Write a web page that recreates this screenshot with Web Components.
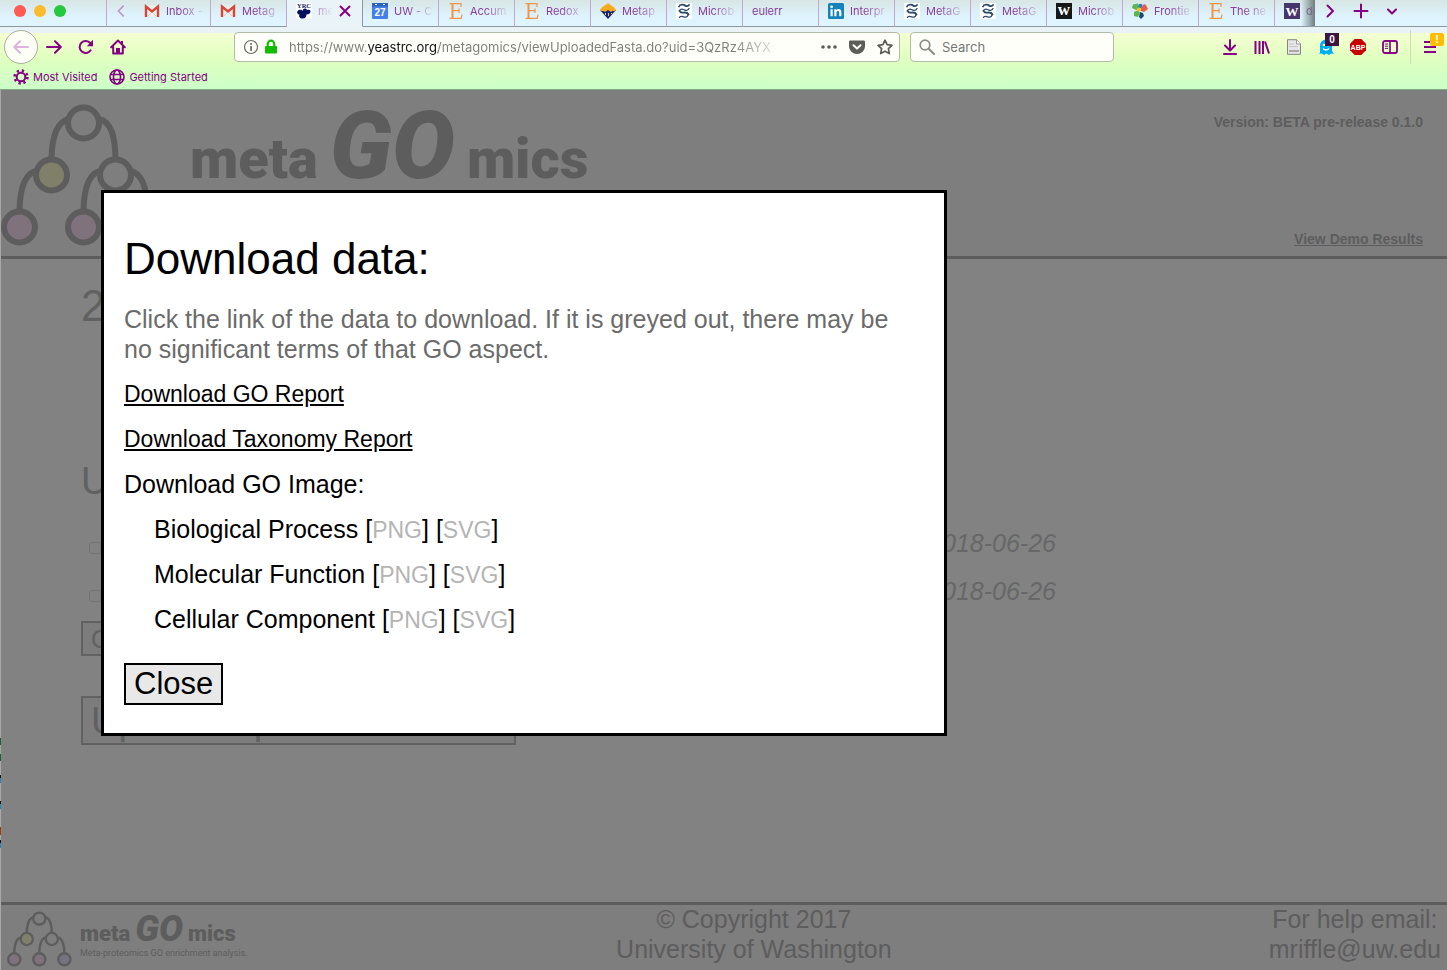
<!DOCTYPE html>
<html lang="en">
<head>
<meta charset="utf-8">
<title>metaGOmics</title>
<style>
html,body{margin:0;height:100%}
body{font-family:"Liberation Sans",Arial,sans-serif;background:#828282}
</style>
</head>
<body>
<app-window></app-window>
<script>
const define = (name, html, setup) => customElements.define(name, class extends HTMLElement {
  constructor() {
    super();
    const t = document.createElement('template');
    t.innerHTML = html;
    this.attachShadow({mode: 'open'}).append(t.content.cloneNode(true));
  }
  connectedCallback() { if (setup) setup(this, this.shadowRoot); }
});

const line = 'fill="none" stroke="currentColor" stroke-width="2" stroke-linecap="round" stroke-linejoin="round"';
const springs = '<rect width="16" height="16" fill="#fff"/><g fill="none" stroke="#2c4a68" stroke-linecap="round"><path d="M3 3.500C4 1 8 1.500 9 2.500s3 1 4-.500" stroke-width="1.800"/><path d="M13 5.500C12 8 9 7.500 7.500 6.500S4 6.500 3 8" stroke-width="1.300"/><path d="M4 8.500c1 2 3 1 5 1s3 1 3.500 2" stroke-width="1.800"/><path d="M12 12c-1 2.500-3 2.500-4.500 1.800S4 13 3.500 14.500" stroke-width="1.300"/></g>';
const glyph = (t, fill, size, y, fam, x = 8) => `<text x="${x}" y="${y}" text-anchor="middle" font-family="${fam}" font-weight="700" font-size="${size}" fill="${fill}">${t}</text>`;
const ICONS = {
  left: `<path ${line} d="M10.500 2.500 5 8l5.500 5.500"/>`,
  right: `<path ${line} d="M5.500 2.500 11 8l-5.500 5.500"/>`,
  down: `<path ${line} d="M4 6.500 8 10.500l4-4"/>`,
  plus: `<path ${line} d="M8 1.500v13M1.500 8h13"/>`,
  close: `<path ${line} d="M3.500 3.500l9 9M12.500 3.500l-9 9"/>`,
  back: `<path ${line} d="M15 8H1.500M7 2.200 1.200 8 7 13.800"/>`,
  forward: `<path ${line} d="M1 8h13.500M9 2.200 14.800 8 9 13.800"/>`,
  reload: `<path ${line} d="M12.600 11.300A6 6 0 1 1 12.300 4.200"/><path fill="currentColor" d="M15 .800V7.200H8.800Z"/>`,
  home: `<path ${line} d="M1.200 8.300 8 1.500l6.800 6.800M3.200 8v6.500h9.600V8"/><path fill="currentColor" d="M6 9h4v6H6zM11 2h2v3h-2z"/>`,
  gear: `<g fill="none" stroke="currentColor"><circle cx="8" cy="8" r="4.300" stroke-width="2"/><circle cx="8" cy="8" r="6.400" stroke-width="2.600" stroke-dasharray="2.300 2.726"/></g>`,
  globe: `<g fill="none" stroke="currentColor" stroke-width="1.600"><circle cx="8" cy="8" r="7"/><ellipse cx="8" cy="8" rx="3.500" ry="7"/><path d="M1.500 5.500h13M1.500 10.500h13"/></g>`,
  info: `<circle cx="8" cy="8" r="6.500" fill="none" stroke="#6a6a66" stroke-width="1.200"/><path fill="#6a6a66" d="M7.200 4h1.700v1.700H7.200zM7.200 7h1.700v5H7.200z"/>`,
  lock: `<rect x="2" y="7" width="12" height="7.500" rx="1" fill="#12bc00"/><path d="M4.700 7.500V5a3.300 3.300 0 0 1 6.600 0v2.500" fill="none" stroke="#12bc00" stroke-width="2.200"/>`,
  dots: `<g fill="#5c5c58"><circle cx="2" cy="8" r="1.800"/><circle cx="8" cy="8" r="1.800"/><circle cx="14" cy="8" r="1.800"/></g>`,
  pocket: `<path fill="#5c5c58" d="M1.500 1.500h13A1.400 1.400 0 0 1 16 3v4.500a8 7.500 0 0 1-16 0V3a1.400 1.400 0 0 1 1.500-1.500Z"/><path d="M4.500 6.300 8 9.600l3.500-3.300" fill="none" stroke="#fdfff8" stroke-width="2" stroke-linecap="round" stroke-linejoin="round"/>`,
  star: `<path d="M8 1.200l2.100 4.500 4.900.600-3.600 3.400.900 4.900L8 12.200l-4.300 2.400.900-4.900L1 6.300l4.900-.600Z" fill="none" stroke="#5c5c58" stroke-width="1.700" stroke-linejoin="round"/>`,
  search: `<circle cx="6" cy="6" r="4.800" fill="none" stroke="#8a8a86" stroke-width="1.700"/><path d="M9.700 9.700 15 15" stroke="#8a8a86" stroke-width="2" stroke-linecap="round"/>`,
  download: `<path ${line} d="M8 1v10M3 6.500 8 11.500l5-5M2 15h12"/>`,
  library: `<path fill="none" stroke="currentColor" stroke-width="2" d="M1.500 2v13M5.500 2v13M9 2v13M11 2.500 15 14.500"/>`,
  page: `<path d="M1.500.700h9L14.500 5v10.300h-13Z" fill="#e6e6e6" stroke="#858585"/><path d="M10.500.700V5h4" fill="#fff" stroke="#999"/><path d="M3 11h10v2H3z" fill="#a8a8a8"/><path d="M3 5h5M3 7.500h9" stroke="#c8c8c8"/>`,
  ghost: `<path d="M2 14V6.500a6 6 0 0 1 12 0V12l2 3-3-.500-2 1.500-2.500-1.500L6 16l-2-1.500L.500 15Z" fill="#00aef0"/><circle cx="6" cy="6" r="1.300" fill="#fff"/><circle cx="10" cy="6" r="1.300" fill="#fff"/><path d="M5 9.500c2 2 4 2 6 0" fill="none" stroke="#fff" stroke-width="1.300"/>`,
  abp: `<path d="M4.700 0h6.600L16 4.700v6.600L11.300 16H4.700L0 11.300V4.700Z" fill="#c80000"/>${glyph('ABP', '#fff', 7, 10.5, 'Liberation Sans')}`,
  sidebar: `<rect x="1" y="2" width="14" height="12" rx="2" fill="none" stroke="currentColor" stroke-width="1.800"/><path d="M8 2v12" stroke="currentColor" stroke-width="1.600"/><path d="M3 5h3M3 7.200h3M3 9.400h3" stroke="currentColor"/>`,
  menu: `<path d="M1 3h12M1 8h12M1 13h12" stroke="currentColor" stroke-width="2"/>`,
  gmail: `<path d="M1.500 2.500h13v11h-13z" fill="#f1efee"/><path d="M2 14V3.500l6 5 6-5V14" fill="none" stroke="#d44638" stroke-width="2.400"/><path d="M4 13l3-3M12 13 9 10" stroke="#cfcac8"/>`,
  yrc: `<rect width="16" height="16" fill="#fff"/>${glyph('YRC', '#101a5c', 6.5, 4.8, 'Liberation Serif')}<path d="M1.500 8c2-2 4-1.500 5 0 0-3 4-3.500 4.500-1 3-1 4.500 1 3 3s-3 1-3.500 1.500c0 2-1 4-4 4s-4-2-3-4c-1.500 0-3-1.500-2-3.500Z" fill="#050f5e"/>`,
  cal: `<rect width="16" height="16" rx="1" fill="#4580e8"/><path d="M0 0h16v3.500H0z" fill="#2c62c0"/><path d="M3 1.500h2M11 1.500h2" stroke="#fff"/>${glyph('27', '#fff', 10, 13, 'Liberation Sans')}`,
  etsy: `<g fill="none" stroke="#f0944c"><path d="M4.500 1v14" stroke-width="2"/><path d="M1.500.600H13V4M1.500 15.400h11.700L14 11.500M5 7.700h6M11 5.500v4.500" stroke-width="1.200"/></g>`,
  diamond: `<path d="M0 7h16L8 16Z" fill="#16257c"/><path d="M0 7C2 3 5 3 8 0c3 3 6 3 8 7-2 2-4 0-5 2L8 7 5 9C4 7 2 9 0 7Z" fill="#f8ab1c"/><path d="M5 10h1v2H5zM8 10h1v3H8zM11 10h1v1h-1z" fill="#f8ce3c"/>`,
  springs,
  linkedin: `<rect width="16" height="16" rx="1.500" fill="#1583bb"/><path fill="#fff" d="M2.500 6.200h2.200v7H2.500zM6.300 6.200h2.100v1c1-1.700 5-1.800 5 1.800v4.200h-2.200V9.500c0-2-2.700-2-2.700 0v3.700H6.300z"/><circle cx="3.600" cy="3.800" r="1.400" fill="#fff"/>`,
  wblack: `<rect width="16" height="16" fill="#151719"/>${glyph('w', '#fff', 17, 12, 'Liberation Serif')}`,
  wpurple: `<rect width="16" height="16" fill="#46366c"/>${glyph('W', '#fff', 13, 12.5, 'Liberation Serif')}`,
  frontiers: `<path d="M1 1.500l5-1 1.500 4L4 7 0 5Z" fill="#5cb84c"/><circle cx="8.500" cy="3" r="2.200" fill="#2a7fc0"/><path d="M9 5l3-4 2 1 2 4-4 3-3-1Z" fill="#ee5a48"/><path d="M2 9l4-2 2 3-2 4-4-1Z" fill="#5cb84c"/><path d="M8 9l3 1 1 3-3 3-2-2Z" fill="#1a4c70"/><circle cx="7" cy="6.500" r="2" fill="#f2c22e"/>`
};

customElements.define('ui-icon', class extends HTMLElement {
  connectedCallback() {
    const r = this.shadowRoot || this.attachShadow({mode: 'open'});
    r.innerHTML = `<style>:host{display:block;flex:none;width:var(--icon,16px);height:var(--icon,16px)}svg{display:block;width:100%;height:100%}</style><svg viewBox="0 0 16 16" aria-hidden="true">${ICONS[this.getAttribute('name')]}</svg>`;
  }
});

define('browser-tab', `<style>
:host{display:block;flex:0 0 76px;min-width:0;box-sizing:border-box;border-right:1px solid #c3a6d2;border-bottom:1px solid #8e979c}
:host([active]){background:#e9f3f8;border-bottom-color:transparent;border-right-color:#8e979c}
button{all:unset;box-sizing:border-box;width:100%;height:26px;display:flex;align-items:center;gap:6px;padding:0 4px 4px 9px;color:#8a3f9c}
span{flex:1;min-width:0;overflow:hidden;white-space:nowrap;font:11px/16px Inter,sans-serif;-webkit-mask:linear-gradient(90deg,#000 calc(100% - 26px),transparent)}
:host([plain]) span{-webkit-mask:none}
ui-icon[name=close]{display:none;color:#850085}
:host([active]) ui-icon[name=close]{display:block;margin-right:5px}
:host([active]) span{margin-right:-2px}
</style><button role="tab"><ui-icon></ui-icon><span><slot></slot></span><ui-icon name="close"></ui-icon></button>`,
(host, root) => {
  const icon = root.querySelector('ui-icon');
  if (host.hasAttribute('plain')) icon.remove();
  else { const n = document.createElement('ui-icon'); n.setAttribute('name', host.getAttribute('icon')); icon.replaceWith(n); }
  root.querySelector('button').setAttribute('aria-selected', host.hasAttribute('active'));
});

define('tab-strip', `<style>
:host{display:flex;height:27px;background:linear-gradient(#d8e6e4,#def3fd 60%,#dff5ff);color:#850085}
.lights{flex:0 0 107px;box-sizing:border-box;display:flex;gap:8px;padding:5px 0 0 14px;border-right:1px solid #c3a6d2;border-bottom:1px solid #8e979c}
.lights i{width:12px;height:12px;border-radius:50%;background:#ff5b52}
.lights i:nth-child(2){background:#fcbb2d}.lights i:nth-child(3){background:#24c83e}
button{all:unset;display:flex;align-items:center;justify-content:center;padding-bottom:5px}
.prev{flex:0 0 28px;box-sizing:border-box;border-bottom:1px solid #8e979c;color:#c096cc;--icon:14px}
.tabs{flex:1;min-width:0;display:flex;overflow:hidden;position:relative}
.tabs::after{content:"";position:absolute;right:0;top:0;bottom:1px;width:14px;background:linear-gradient(90deg,transparent,#6f7c80)}
.end{flex:0 0 132px;box-sizing:border-box;display:flex;align-items:center;border-bottom:1px solid #8e979c;gap:15px;padding-left:7px}
</style>
<div class="lights"><i></i><i></i><i></i></div>
<button class="prev" aria-label="Scroll tabs left"><ui-icon name="left"></ui-icon></button>
<div class="tabs" role="tablist">
<browser-tab icon="gmail">Inbox -</browser-tab><browser-tab icon="gmail">Metag</browser-tab><browser-tab icon="yrc" active>me</browser-tab><browser-tab icon="cal">UW - C</browser-tab><browser-tab icon="etsy">Accum</browser-tab><browser-tab icon="etsy">Redox</browser-tab><browser-tab icon="diamond">Metap</browser-tab><browser-tab icon="springs">Microb</browser-tab><browser-tab plain>eulerr</browser-tab><browser-tab icon="linkedin">Interpr</browser-tab><browser-tab icon="springs">MetaG</browser-tab><browser-tab icon="springs">MetaG</browser-tab><browser-tab icon="wblack">Microb</browser-tab><browser-tab icon="frontiers">Frontie</browser-tab><browser-tab icon="etsy">The ne</browser-tab><browser-tab icon="wpurple">do</browser-tab>
</div>
<div class="end"><button aria-label="Scroll tabs right"><ui-icon name="right"></ui-icon></button><button aria-label="New tab"><ui-icon name="plus"></ui-icon></button><button aria-label="All tabs"><ui-icon name="down"></ui-icon></button></div>`);

define('nav-bar', `<style>
:host{display:flex;align-items:center;height:40px;color:#850085;font-family:Inter,sans-serif}
button{all:unset;position:relative;display:block}
.back{width:32px;height:32px;border:1px solid #a7b09c;border-radius:50%;background:#fdfef6;display:grid;place-items:center;color:#dcb4dc;margin:0 8px 0 4px}
.nav{display:flex;gap:16px}
.field{box-sizing:border-box;height:30px;min-width:0;display:flex;align-items:center;gap:4px;border:1px solid #b1bda6;border-radius:4px;background:#fdfff8;padding:0 6px 0 8px}
.url{flex:1;margin-left:108px}
.find{flex:0 0 204px;gap:7px;margin:0 108px 0 10px}
input{all:unset;flex:1;width:0;min-width:0;height:28px;font-size:13px;color:#777}
.url input{margin:0 30px 0 6px;-webkit-text-fill-color:transparent;background:linear-gradient(90deg,#7d7d7a 79px,#111 79px 149px,#7d7d7a 149px);background-clip:text;-webkit-background-clip:text;-webkit-mask:linear-gradient(90deg,#000 calc(100% - 55px),transparent)}
.acts{display:flex;gap:12px}
.badge{position:absolute;left:7px;top:-6px;width:14px;height:13px;background:#3c1440;color:#fff;font:700 10px/13px "Liberation Sans",sans-serif;text-align:center}
.warn{border-radius:2px;background:#ffbf00;font-size:11px}
.sep{width:1px;height:34px;background:#cbdfb0;margin:0 12px}
.menu{margin-right:8px}
</style>
<button class="back" aria-label="Back"><ui-icon name="back"></ui-icon></button>
<div class="nav"><button aria-label="Forward"><ui-icon name="forward"></ui-icon></button><button aria-label="Reload"><ui-icon name="reload"></ui-icon></button><button aria-label="Home"><ui-icon name="home"></ui-icon></button></div>
<div class="field url"><ui-icon name="info"></ui-icon><ui-icon name="lock"></ui-icon><input aria-label="Address" value="https://www.yeastrc.org/metagomics/viewUploadedFasta.do?uid=3QzRz4AYX"><div class="acts"><ui-icon name="dots"></ui-icon><ui-icon name="pocket"></ui-icon><ui-icon name="star"></ui-icon></div></div>
<div class="field find"><ui-icon name="search"></ui-icon><input aria-label="Search" value="Search"></div>
<div class="nav"><button aria-label="Downloads"><ui-icon name="download"></ui-icon></button><button aria-label="Library"><ui-icon name="library"></ui-icon></button><button aria-label="Page"><ui-icon name="page"></ui-icon></button><button aria-label="Tracker blocker"><ui-icon name="ghost"></ui-icon><span class="badge">0</span></button><button aria-label="Ad blocker"><ui-icon name="abp"></ui-icon></button><button aria-label="Sidebars"><ui-icon name="sidebar"></ui-icon></button></div>
<div class="sep"></div>
<button class="menu" aria-label="Menu"><ui-icon name="menu"></ui-icon><span class="badge warn">!</span></button>`);

define('browser-chrome', `<style>
:host{display:block;flex:none;box-sizing:border-box;height:90px;border-bottom:1px solid #84a881;background:linear-gradient(#e9f2f6 33px,#f5ffd2 33px,#e0ffc0 58px,#ccffc8)}
nav{display:flex;gap:12px;padding-left:13px;height:20px;align-items:center}
a{display:flex;align-items:center;gap:4px;color:#850085;text-decoration:none;font:11px/16px Inter,sans-serif}
</style><tab-strip></tab-strip><nav-bar></nav-bar><nav><a href="#"><ui-icon name="gear"></ui-icon>Most Visited</a><a href="#"><ui-icon name="globe"></ui-icon>Getting Started</a></nav>`);

define('go-tree', `<style>:host{display:block;flex:none;width:var(--tree-w);height:var(--tree-h)}svg{display:block;width:100%;height:100%}</style>
<svg viewBox="0 0 166 142" fill="#7e7e7e" stroke="#5d5d5d" stroke-width="6"><g fill="none"><path d="M68 15C55 18 51 34 50.500 54M98 15c13 3 16 19 16.500 39M36 67C23 69 19 87 18.500 106M129 67c13 2 17 20 17.500 39M100 67c-13 2-17 20-17.500 39"/></g>
<circle cx="82.500" cy="19" r="15.500"/><circle cx="50.500" cy="71" r="15.500" fill="#80806a"/><circle cx="114.500" cy="71" r="15.500"/><circle cx="18.500" cy="123" r="15.500" fill="#80727c"/><circle cx="82.500" cy="123" r="15.500" fill="#80727c"/><circle cx="146.500" cy="123" r="15.500" fill="#74747f"/></svg>`);

define('word-mark', `<style>
:host{display:flex;align-items:baseline;gap:var(--mark-gap);height:var(--mark-go);color:#5d5d5d;font:900 var(--mark-size)/1 Roboto,sans-serif}
em{font-size:var(--mark-go);line-height:1}
</style><span>meta</span><em>GO</em><span>mics</span>`);

define('site-header', `<style>
:host{display:flex;flex:none;justify-content:space-between;box-sizing:border-box;height:169px;background:#7e7e7e;border-bottom:3px solid #5d5d5d;color:#5d5d5d}
.logo{display:flex;gap:23px;padding-top:9px;--tree-w:166px;--tree-h:142px;--mark-size:56px;--mark-go:94px;--mark-gap:12px}
go-tree{margin-top:5px}
.side{display:flex;flex-direction:column;justify-content:space-between;align-items:flex-end;padding:24px 24px 9px 0;font:700 14px/16px "Liberation Sans",sans-serif}
a{color:inherit}
</style><div class="logo"><go-tree></go-tree><word-mark></word-mark></div><div class="side"><span>Version: BETA pre-release 0.1.0</span><a href="#">View Demo Results</a></div>`);

define('run-row', `<style>
:host{display:flex;justify-content:space-between;align-items:center;height:48px;max-width:975px;font:italic 25px/30px "Liberation Sans",sans-serif;color:#676767}
input{appearance:none;width:12px;height:12px;margin:9px 0 0 8px;border:1px solid #747474;border-radius:3px}
</style><input type="checkbox" aria-label="Select run"><time><slot></slot></time>`);

define('upload-view', `<style>
:host{display:block;flex:1;padding:22px 80px 0;color:#616161}
h1{font-weight:400;font-size:44px;line-height:50px;margin:0 0 128px}
h2{font-weight:400;font-size:38px;line-height:44px;margin:0 0 16px}
button{display:block;box-sizing:border-box;font:25px/30px "Liberation Sans",sans-serif;color:inherit;background:#7c7c7c;border:2px solid #616161;text-align:left;padding:0 8px}
.compare{width:240px;height:35px;margin:6px 0 40px}
.upload{width:435px;height:49px;font-size:38px;line-height:44px}
</style><h1>2</h1><h2>U</h2><run-row>2018-06-26</run-row><run-row>2018-06-26</run-row><button class="compare">C</button><button class="upload">Upload a p</button>`);

define('site-footer', `<style>
:host{display:flex;flex:none;justify-content:space-between;box-sizing:border-box;height:68px;padding:0 6px;background:#7e7e7e;border-top:3px solid #5d5d5d;color:#5d5d5d;font-size:25px;line-height:30px;text-align:center}
.logo{display:flex;gap:8px;padding-top:6px;width:232px;--tree-w:65px;--tree-h:56px;--mark-size:22px;--mark-go:36px;--mark-gap:5px}
.logo small{display:block;font:9px/12px Roboto,sans-serif;text-align:left;white-space:nowrap}
p{margin:-1px 0 0}a{color:inherit;text-decoration:none}
</style><div class="logo"><go-tree></go-tree><div><word-mark></word-mark><small>Meta-proteomics GO enrichment analysis.</small></div></div>
<p>© Copyright 2017<br>University of Washington</p><p>For help email:<br><a href="mailto:mriffle@uw.edu">mriffle@uw.edu</a></p>`);

define('image-row', `<style>:host{display:block;height:30px;padding-left:30px}a{font-size:23px;line-height:20px;color:#b4b4b4}</style><slot></slot> [<a>PNG</a>] [<a>SVG</a>]`);

define('download-dialog', `<style>
:host{display:block;box-sizing:border-box;background:#fff;border:3px solid #000;padding:41px 20px 28px;color:#000;font-size:25px;line-height:30px}
h1{font-weight:400;font-size:44px;line-height:50px;margin:0 0 20px}
p{margin:0;padding-right:16px;color:#6b6b6b}
.list{display:grid;gap:15px;justify-items:start;margin-bottom:29px}
.list>a{color:#000;font-size:23px}
button{display:block;font:31px/36px "Liberation Sans",sans-serif;border:2px solid #000;background:#e8e8e8;color:#000;padding:1px 8px}
</style><h1>Download data:</h1><div class="list"><p>Click the link of the data to download. If it is greyed out, there may be no significant terms of that GO aspect.</p><a href="#">Download GO Report</a><a href="#">Download Taxonomy Report</a><span>Download GO Image:</span><image-row>Biological Process</image-row><image-row>Molecular Function</image-row><image-row>Cellular Component</image-row></div><button>Close</button>`,
host => host.setAttribute('role', 'dialog'));

define('app-window', `<style>
:host{display:flex;flex-direction:column;min-height:100vh}
main{flex:1;display:flex;flex-direction:column;position:relative;padding-left:1px;background:linear-gradient(#a8a8a8 648px,#1f5f35 648px 655px,#8fae98 655px 664px,#1f5f35 664px 671px,#a8a8a8 671px 685px,#111 685px 688px,#3080b8 688px 693px,#a8a8a8 693px 711px,#111 711px 714px,#3080b8 714px 719px,#a8a8a8 719px 737px,#984010 737px 745px,#a8a8a8 745px 750px,#111 750px 753px,#3080b8 753px 758px,#a8a8a8 758px)}
upload-view{background:#828282}
download-dialog{position:absolute;left:101px;right:500px;top:100px}
</style><browser-chrome></browser-chrome><main><site-header></site-header><upload-view></upload-view><site-footer></site-footer><download-dialog></download-dialog></main>`);
</script>
</body>
</html>
